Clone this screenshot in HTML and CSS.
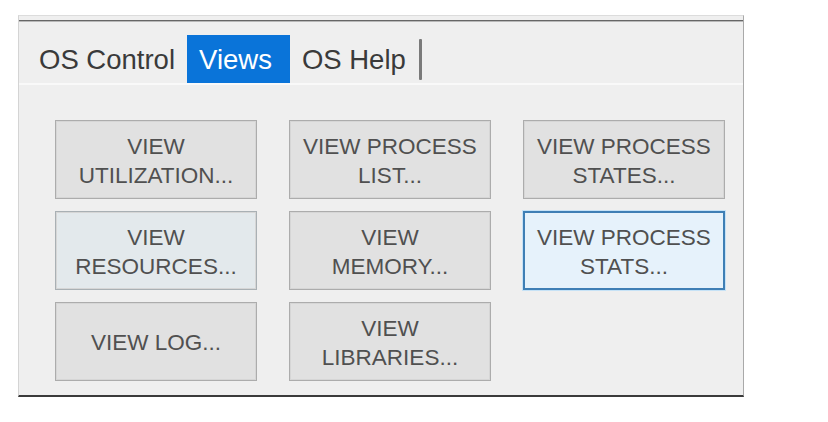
FILE: index.html
```
<!DOCTYPE html>
<html lang="en">
<head>
    <meta charset="UTF-8">
    <title>OS Views</title>
    <link rel="stylesheet" href="styles.css">
</head>
<body>
    <div class="panel">
        <div class="panel-top"></div>
        <div class="tabs">
            <div class="tab first">OS Control</div>
            <div class="tab active">Views</div>
            <div class="tab last">OS Help</div>
        </div>
        <div class="panel-body">
            <div class="button-grid">
                <button class="view-button">VIEW<br>UTILIZATION...</button>
                <button class="view-button">VIEW PROCESS<br>LIST...</button>
                <button class="view-button">VIEW PROCESS<br>STATES...</button>
                <button class="view-button hover">VIEW<br>RESOURCES...</button>
                <button class="view-button">VIEW<br>MEMORY...</button>
                <button class="view-button focused">VIEW PROCESS<br>STATS...</button>
                <button class="view-button">VIEW LOG...</button>
                <button class="view-button">VIEW<br>LIBRARIES...</button>
            </div>
        </div>
    </div>
</body>
</html>
```

FILE: styles.css
```
* {
    margin: 0;
    padding: 0;
    box-sizing: border-box;
}

body {
    font-family: "Liberation Sans", Arial, sans-serif;
    background: #fff;
    width: 828px;
    height: 422px;
}

.panel {
    margin: 15px 0 0 18px;
    width: 726px;
    height: 382px;
    background: #efefef;
    border-top: 1px solid #dcdcdc;
    border-left: 1px solid #d4d4d4;
    border-right: 1px solid #a9a9a9;
    border-bottom: 2px solid #3a3a3a;
    display: flex;
    flex-direction: column;
}

.panel-top {
    margin-top: 4px;
    height: 2px;
    background: #666;
    border-bottom: 1px solid #b8b8b8;
}

.tabs {
    display: flex;
    align-items: flex-end;
    height: 63px;
    padding-left: 6px;
    border-bottom: 2px solid #f9f9f9;
}

.tab {
    height: 48px;
    font-size: 27.5px;
    line-height: 50px;
    color: #3a3a3a;
}

.tab.first {
    padding: 0 12px 0 14px;
}

.tab.active {
    background: #0a74d9;
    color: #fff;
    padding: 0 18px 0 12px;
}

.tab.last {
    padding: 0 16px 0 12px;
    position: relative;
}

.tab.last::after {
    content: '';
    position: absolute;
    right: 0;
    top: 4px;
    width: 3px;
    height: 41px;
    background: #7a7a7a;
    border-radius: 1px;
}

.panel-body {
    flex: 1;
    padding: 35px 0 0 36px;
}

.button-grid {
    display: grid;
    grid-template-columns: repeat(3, 202px);
    grid-auto-rows: 79px;
    column-gap: 32px;
    row-gap: 12px;
}

.view-button {
    font-family: "Liberation Sans", Arial, sans-serif;
    font-size: 22.5px;
    line-height: 29px;
    padding-top: 2px;
    color: #505050;
    background: #e1e1e1;
    border: 1px solid #acacac;
    box-shadow: inset 0 0 0 1px #d6d6d6;
    text-align: center;
}

.view-button.hover {
    background: #e3e9ec;
    border-color: #a9b0b4;
}

.view-button.focused {
    background: #e6f2fb;
    border: 2px solid #3f7fb5;
    box-shadow: 0 0 0 1px #c6e2f6;
}
```
